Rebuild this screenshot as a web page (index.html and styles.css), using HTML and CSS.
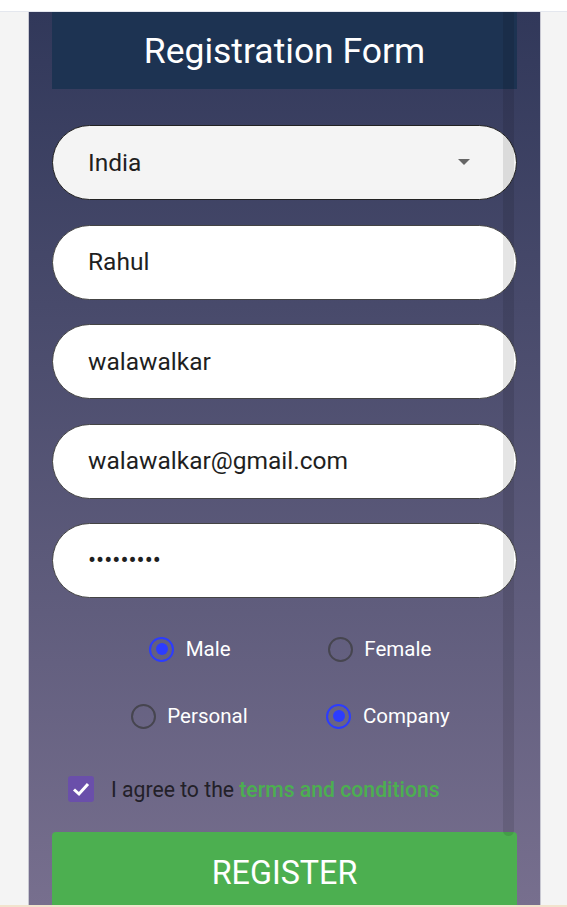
FILE: index.html
```html
<!DOCTYPE html>
<html>
<head>
<meta charset="utf-8">
<link rel="stylesheet" href="styles.css">
</head>
<body>
<div class="topbar"></div>
<div class="stage">
  <div class="card">
    <div class="header">Registration Form</div>
    <div class="field select"><span>India</span><span class="caret"></span></div>
    <div class="field">Rahul</div>
    <div class="field">walawalkar</div>
    <div class="field">walawalkar@gmail.com</div>
    <div class="field pwd">•••••••••</div>
    <div class="radio-row">
      <div class="opt"><span class="slot"><span class="radio on"></span></span><span class="lbl">Male</span></div>
      <div class="opt"><span class="slot"><span class="radio"></span></span><span class="lbl">Female</span></div>
    </div>
    <div class="radio-row second">
      <div class="opt"><span class="slot"><span class="radio"></span></span><span class="lbl">Personal</span></div>
      <div class="opt"><span class="slot"><span class="radio on"></span></span><span class="lbl">Company</span></div>
    </div>
    <div class="agree">
      <span class="check"><svg width="22" height="22" viewBox="0 0 22 22"><path d="M4 11.5 L9 16 L18 6" fill="none" stroke="#fff" stroke-width="3"/></svg></span>
      <span class="agree-text">I agree to the <span class="terms">terms and conditions</span></span>
    </div>
    <div class="register">REGISTER</div>
    <div class="scrollbar"></div>
  </div>
</div>
<div class="bottombar"></div>
</body>
</html>
```
FILE: styles.css
```css
html, body {
  margin: 0;
  padding: 0;
  height: 907px;
  overflow: hidden;
  font-family: Roboto, "Liberation Sans", sans-serif;
}
.topbar {
  height: 11px;
  background: #ffffff;
  border-bottom: 1px solid #e4e7ee;
}
.stage {
  height: 893px;
  background: #f4f4f4;
  overflow: hidden;
}
.bottombar {
  height: 2px;
  background: #f1e3cd;
}
.card {
  position: relative;
  margin-left: 28px;
  width: 465px;
  height: 893px;
  padding: 0 23px;
  border-left: 1px solid #c8c8d2;
  border-right: 1px solid #c8c8d2;
  background: linear-gradient(180deg, #31385a 0%, #776f8e 100%);
  overflow: hidden;
}
.header {
  height: 77px;
  background: #1d3352;
  color: #ffffff;
  font-size: 35.5px;
  display: flex;
  align-items: center;
  justify-content: center;
  margin-bottom: 36px;
}
.field {
  box-sizing: border-box;
  height: 75px;
  border: 1px solid #444;
  border-radius: 38px;
  background: #ffffff;
  margin-bottom: 24.5px;
  padding-left: 35px;
  padding-right: 46px;
  padding-bottom: 1px;
  display: flex;
  align-items: center;
  font-size: 24.5px;
  color: #1f1f1f;
}
.select {
  background: #f4f4f4;
  border-color: #222;
  justify-content: space-between;
}
.caret {
  width: 0;
  height: 0;
  border-left: 6px solid transparent;
  border-right: 6px solid transparent;
  border-top: 6px solid #666;
}
.pwd {
  font-size: 24px;
  letter-spacing: 0;
}
.radio-row {
  display: flex;
  justify-content: space-evenly;
  height: 48px;
  margin-top: 27px;
}
.radio-row.second {
  margin-top: 19px;
}
.opt {
  display: flex;
  align-items: center;
}
.slot {
  width: 48px;
  height: 48px;
  display: flex;
  align-items: center;
  justify-content: center;
}
.radio {
  box-sizing: border-box;
  width: 25px;
  height: 25px;
  border-radius: 50%;
  border: 2.5px solid #46454f;
  display: flex;
  align-items: center;
  justify-content: center;
}
.radio.on {
  border-color: #2c3cff;
}
.radio.on::after {
  content: "";
  width: 12px;
  height: 12px;
  border-radius: 50%;
  background: #2c3cff;
}
.lbl {
  color: #ffffff;
  font-size: 20.5px;
}
.agree {
  display: flex;
  align-items: center;
  height: 48px;
  margin-top: 25px;
  padding-left: 16px;
}
.check {
  width: 26px;
  height: 26px;
  border-radius: 3px;
  background: #6a4faa;
  display: flex;
  align-items: center;
  justify-content: center;
  margin-right: 17px;
}
.agree-text {
  font-size: 21.2px;
  color: #222028;
}
.terms {
  color: #4caf50;
  font-weight: 500;
}
.register {
  margin-top: 19px;
  height: 80px;
  background: #4caf50;
  border-radius: 4px;
  color: #ffffff;
  font-size: 32.3px;
  display: flex;
  justify-content: center;
  padding-top: 22px;
  box-sizing: border-box;
}
.scrollbar {
  position: absolute;
  top: 0;
  left: 474px;
  width: 11px;
  height: 824px;
  border-radius: 0 0 6px 6px;
  background: rgba(0, 0, 0, 0.1);
}
```
